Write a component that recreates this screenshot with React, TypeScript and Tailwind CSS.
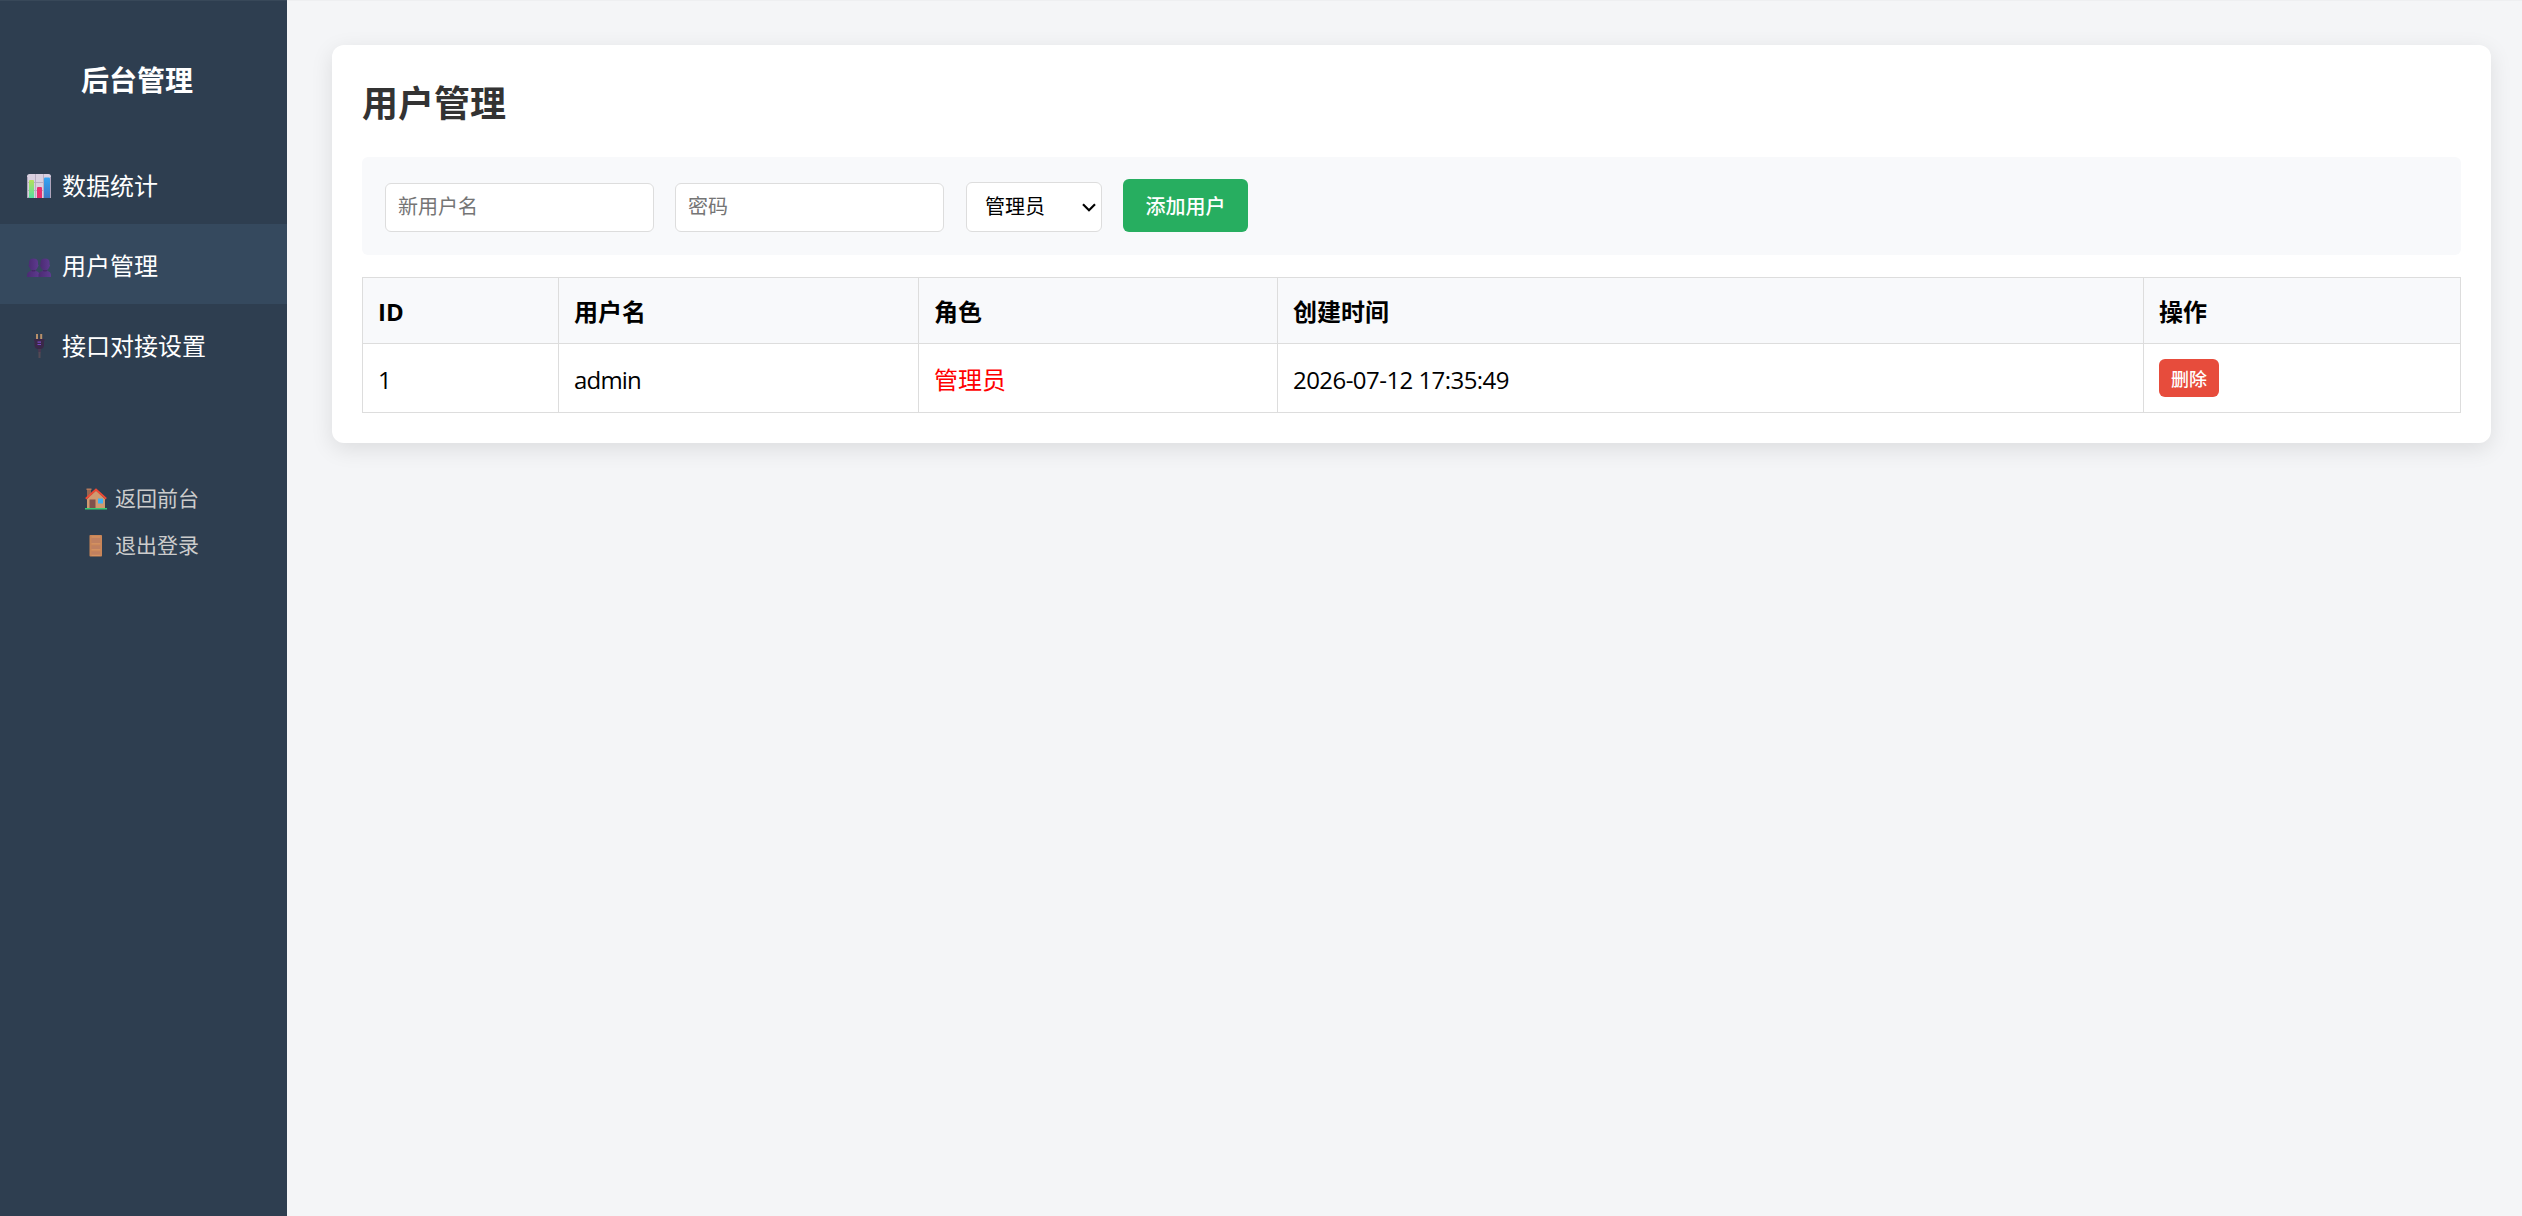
import React, { useState } from 'react';

const ChartIcon = () => (
  <svg viewBox="0 0 24 24" className="w-6 h-6 shrink-0">
    <defs>
      <linearGradient id="barGreen" x1="0" y1="0" x2="0" y2="1">
        <stop offset="0" stopColor="#b5e05a" />
        <stop offset="1" stopColor="#55e0a0" />
      </linearGradient>
      <linearGradient id="barBlue" x1="0" y1="0" x2="0" y2="1">
        <stop offset="0" stopColor="#35a5f5" />
        <stop offset="1" stopColor="#3d78c4" />
      </linearGradient>
    </defs>
    <rect width="24" height="24" rx="2.5" fill="#d9d0e0" />
    <path d="M8.500 0v24M16.500 0v24M0 8.500h24M0 16.500h24" stroke="#b8aec2" strokeWidth="1" />
    <path d="M.5 3v21M23.500 3v21" stroke="#b0a5bb" strokeWidth="1" />
    <path d="M2 24V7q0-1 1-1h3q1 0 1 1v17z" fill="url(#barGreen)" />
    <path d="M10 24V14q0-1 1-1h3q1 0 1 1v10z" fill="#e8306e" />
    <path d="M17 24V4.500q0-1 1-1h4q1 0 1 1V24z" fill="url(#barBlue)" />
  </svg>
);

const UsersIcon = () => (
  <svg viewBox="0 0 24 24" className="w-6 h-6 shrink-0">
    <defs>
      <linearGradient id="bust" x1="0" y1="0" x2="1" y2="0">
        <stop offset="0" stopColor="#4b2b72" />
        <stop offset="1" stopColor="#5e3a90" />
      </linearGradient>
    </defs>
    {[0, 11.5].map(x => (
      <g key={x} transform={`translate(${x} 1)`} fill="url(#bust)">
        <path d="M2 7.500q0-4 4.500-4T11 7.500v2l.6 1-.8 1.500Q10 15 6.500 15.500 3 15 2.200 12l-.9-1.500.7-1z" />
        <path d="M0 22v-2.500q.5-3 4-3.500l.8-1.500h3.400L9 16q3 .5 3.500 3.500V22z" />
        <path d="M4.500 15q2 1.200 4 0L8 16.300H5z" fill="#38234f" />
      </g>
    ))}
  </svg>
);

const PlugIcon = () => (
  <svg viewBox="0 0 24 24" className="w-6 h-6 shrink-0">
    <path d="M9 0h2v6H9zM13.200 0h2v6h-2z" fill="#b8906a" />
    <path d="M7 5h10.500v2H17v4q0 3-3 4h-3.500q-3-1-3-4V7H7z" fill="#3a2848" />
    <path d="M10.500 8.200H14M10.500 10.500H14" stroke="#7a48c8" strokeWidth="1.200" />
    <path d="M11 15h3l-.3 4h-2.200z" fill="#493850" />
    <path d="M12.500 18v6" stroke="#544a55" strokeWidth="2" />
  </svg>
);

const HouseIcon = () => (
  <svg viewBox="0 0 22 22" className="w-[22px] h-[22px] shrink-0">
    <rect x="2" y="1" width="4" height="8" fill="#96654f" />
    <rect x="1.500" y=".5" width="5" height="1.500" fill="#b57a5c" />
    <path d="M2 11l9-8.500 9 8.500v9.500H2z" fill="#d09a70" />
    <path d="M.8 10.800L11 1.500l10.200 9.300" fill="none" stroke="#ee4a35" strokeWidth="2" />
    <rect x="4.500" y="11.500" width="6" height="9" fill="#80504c" />
    <rect x="13" y="10.500" width="5" height="5" fill="#3eb0f4" />
    <path d="M0 20h22v1.500H0z" fill="#38c872" />
  </svg>
);

const DoorIcon = () => (
  <svg viewBox="0 0 22 22" className="w-[22px] h-[22px] shrink-0">
    <rect x="4.500" y="0" width="12.500" height="21.500" rx=".8" fill="#c98558" />
    <path d="M6.500 2.500h8.800v6H6.500zM6.500 10.500h8.800v4H6.500zM6.500 16.500h8.800v3.500H6.500z" fill="#c08060" />
    <path d="M6.500 8.800h8.800M6.500 14.800h8.800M6.500 20.300h8.800M6.500 2h8.800" stroke="#dd9865" strokeWidth=".9" />
  </svg>
);

const menu = [
  { key: 'stats', label: '数据统计', icon: ChartIcon },
  { key: 'users', label: '用户管理', icon: UsersIcon },
  { key: 'api', label: '接口对接设置', icon: PlugIcon },
];

const users = [
  { id: 1, name: 'admin', role: '管理员', createdAt: '2026-07-12 17:35:49' },
];

const inputClass =
  'w-[269px] h-[49px] rounded-[6px] border border-[#ddd] bg-white px-3 pb-[2px] text-[20px] text-black placeholder:text-[#757575] outline-none';

const cellClass = 'border border-[#ddd] px-[15px] pt-[3px]';

const App = () => {
  const [active, setActive] = useState('users');
  const [username, setUsername] = useState('');
  const [password, setPassword] = useState('');

  return (
    <div className="flex min-h-screen bg-[#f4f5f7] text-black font-['Open_Sans','Noto_Sans_CJK_SC',sans-serif]">
      {/* Sidebar */}
      <aside className="w-[287px] shrink-0 border-t border-[#384859] bg-[#2e3e50] text-white">
        <h2 className="h-[143px] pt-[58px] pr-[13px] text-center text-[28px] leading-[42px] font-bold">后台管理</h2>
        <nav>
          {menu.map(({ key, label, icon: Icon }) => (
            <a
              key={key}
              onClick={() => setActive(key)}
              className={`flex h-20 items-center gap-[11px] pl-[27px] pt-1 text-[24px] leading-9 cursor-pointer ${active === key ? 'bg-[#35495e]' : ''}`}
            >
              <Icon />
              <span>{label}</span>
            </a>
          ))}
        </nav>
        <div className="mt-[91px] flex flex-col pl-[85px] text-[21px] text-[#ccc]">
          <a className="flex h-[47px] items-center gap-[8px] cursor-pointer"><HouseIcon />返回前台</a>
          <a className="flex h-[47px] items-center gap-[8px] cursor-pointer"><DoorIcon />退出登录</a>
        </div>
      </aside>

      {/* Content */}
      <main className="flex-1 border-t border-[#eeeff1] pt-[44px] pl-[45px] pr-[31px]">
        <div className="h-[398px] rounded-xl bg-white px-[30px] shadow-[0_6px_22px_rgba(0,0,0,0.1)]">
          <h1 className="h-28 pt-8 text-[36px] leading-[54px] font-bold text-[#333]">用户管理</h1>

          <div className="flex h-[98px] items-end rounded-[6px] bg-[#f8f9fb] pb-[23px] pl-[23px]">
            <input className={inputClass} placeholder="新用户名" value={username} onChange={e => setUsername(e.target.value)} />
            <input className={`${inputClass} ml-[21px]`} type="password" placeholder="密码" value={password} onChange={e => setPassword(e.target.value)} />
            <div className="relative ml-[22px]">
              <select className="block h-[50px] w-[136px] appearance-none rounded-[6px] border border-[#ddd] bg-white pl-[18px] text-[20px] outline-none">
                <option>管理员</option>
                <option>普通用户</option>
              </select>
              <svg viewBox="0 0 14 9" className="pointer-events-none absolute right-[6px] top-[21px] h-[9px] w-[14px]">
                <path d="M1 1.200l6 6 6-6" fill="none" stroke="#000" strokeWidth="2.200" />
              </svg>
            </div>
            <button className="ml-[21px] h-[53px] w-[125px] rounded-[6px] bg-[#27ae60] pt-[2px] text-[20px] font-medium text-white">添加用户</button>
          </div>

          <table className="mt-[22px] w-full table-fixed border-collapse text-left text-[24px] leading-9">
            <colgroup>
              <col className="w-[196px]" />
              <col className="w-[360px]" />
              <col className="w-[359px]" />
              <col className="w-[866px]" />
              <col />
            </colgroup>
            <thead>
              <tr className="h-[66px] bg-[#f8f9fb]">
                {['ID', '用户名', '角色', '创建时间', '操作'].map(h => (
                  <th key={h} className="border border-[#ddd] px-[15px] pt-[2px] font-bold">{h}</th>
                ))}
              </tr>
            </thead>
            <tbody>
              {users.map(u => (
                <tr key={u.id} className="h-[69px]">
                  <td className={cellClass}>{u.id}</td>
                  <td className={`${cellClass} tracking-[-0.8px]`}>{u.name}</td>
                  <td className={`${cellClass} text-[#f00]`}>{u.role}</td>
                  <td className={`${cellClass} tracking-[-0.55px]`}>{u.createdAt}</td>
                  <td className="border border-[#ddd] px-[15px]">
                    <button className="block h-[38px] w-[60px] rounded-[6px] bg-[#e74c3c] pt-[2px] text-[18px] font-medium text-white">删除</button>
                  </td>
                </tr>
              ))}
            </tbody>
          </table>
        </div>
      </main>
    </div>
  );
};

export default App;
